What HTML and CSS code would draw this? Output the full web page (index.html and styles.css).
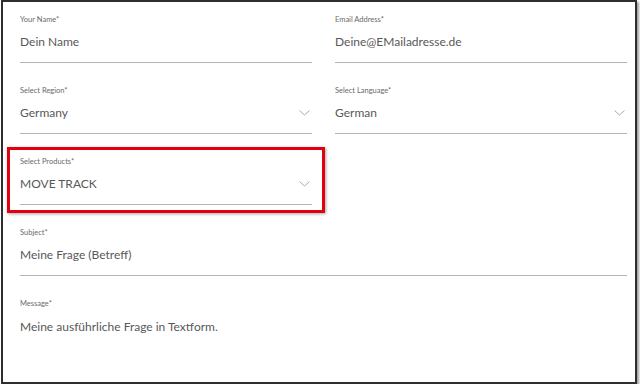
FILE: index.html
```html
<!DOCTYPE html>
<html>
  <head>
    <meta charset="UTF-8">
    <title>Kontaktformular</title>
    <link rel="stylesheet" href="styles.css">
  </head>
  <body>
    <div class="frame">
      <form class="contact-form">
        <div class="field">
          <label class="field-label">Your Name*</label>
          <div class="field-value">Dein Name</div>
        </div>
        <div class="field">
          <label class="field-label">Email Address*</label>
          <div class="field-value">Deine@EMailadresse.de</div>
        </div>

        <div class="field">
          <label class="field-label">Select Region*</label>
          <div class="field-value select">
            <span>Germany</span>
            <svg class="chevron" width="11" height="6" viewBox="0 0 11 6"><path d="M0.5 0.5 L5.5 5 L10.5 0.5" fill="none" stroke="#a0a0a0" stroke-width="0.9"/></svg>
          </div>
        </div>
        <div class="field">
          <label class="field-label">Select Language*</label>
          <div class="field-value select">
            <span>German</span>
            <svg class="chevron" width="11" height="6" viewBox="0 0 11 6"><path d="M0.5 0.5 L5.5 5 L10.5 0.5" fill="none" stroke="#a0a0a0" stroke-width="0.9"/></svg>
          </div>
        </div>

        <div class="field highlight">
          <label class="field-label">Select Products*</label>
          <div class="field-value select">
            <span>MOVE TRACK</span>
            <svg class="chevron" width="11" height="6" viewBox="0 0 11 6"><path d="M0.5 0.5 L5.5 5 L10.5 0.5" fill="none" stroke="#a0a0a0" stroke-width="0.9"/></svg>
          </div>
        </div>
        <div class="spacer"></div>

        <div class="field wide">
          <label class="field-label">Subject*</label>
          <div class="field-value">Meine Frage (Betreff)</div>
        </div>

        <div class="field wide no-line">
          <label class="field-label">Message*</label>
          <div class="field-value">Meine ausführliche Frage in Textform.</div>
        </div>
      </form>
    </div>
  </body>
</html>
```

FILE: styles.css
```css
body {
  margin: 0;
  background: #fff;
  font-family: Lato, 'Open Sans', Arial, sans-serif;
}

.frame {
  margin-left: 1px;
  width: 632px;
  height: 380px;
  border: 2px solid #2e2e2e;
  box-shadow: 2px 2px 2px #a0a0a0;
  background: #fff;
}

.contact-form {
  display: grid;
  grid-template-columns: 292px 292px;
  column-gap: 23px;
  row-gap: 23px;
  padding: 13px 0 0 17px;
}

.field {
  border-bottom: 1px solid #b4b4b4;
  padding-bottom: 11px;
}

.field.wide {
  grid-column: 1 / 3;
}

.field.no-line {
  border-bottom: none;
}

.field-label {
  display: block;
  font-size: 7.5px;
  line-height: 10px;
  color: #6a6a6a;
}

.field-value {
  margin-top: 8px;
  font-size: 12px;
  line-height: 18px;
  color: #585858;
}

.no-line .field-value {
  margin-top: 9px;
}

.select {
  display: flex;
  justify-content: space-between;
  align-items: center;
}

.chevron {
  margin-right: 2px;
}

.highlight {
  position: relative;
}

.highlight::after {
  content: "";
  position: absolute;
  top: -10px;
  left: -13px;
  right: -13px;
  bottom: -9px;
  border: 3px solid #e0000f;
  box-shadow: 1px 1px 3px rgba(0, 0, 0, 0.35);
}
```
